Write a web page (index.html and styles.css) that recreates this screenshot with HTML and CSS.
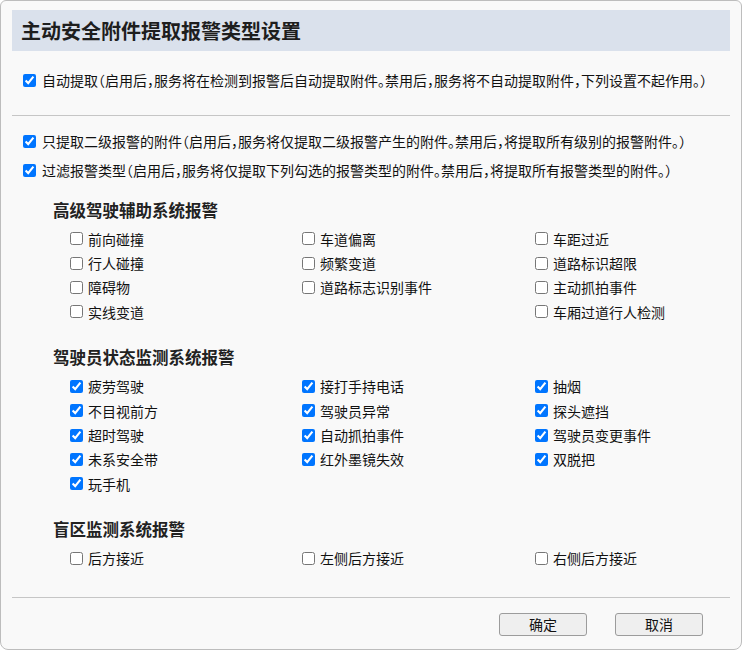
FILE: index.html
```html
<!DOCTYPE html>
<html lang="zh-CN">
<head>
<meta charset="utf-8">
<title>主动安全附件提取报警类型设置</title>
<link rel="stylesheet" href="styles.css">
</head>
<body>
<div class="window">
  <div class="title">主动安全附件提取报警类型设置</div>

  <label class="opt opt-first"><input type="checkbox" checked><span>自动提取（启用后，服务将在检测到报警后自动提取附件。禁用后，服务将不自动提取附件，下列设置不起作用。）</span></label>

  <hr class="sep sep-top">

  <label class="opt opt-second"><input type="checkbox" checked><span>只提取二级报警的附件（启用后，服务将仅提取二级报警产生的附件。禁用后，将提取所有级别的报警附件。）</span></label>
  <label class="opt opt-third"><input type="checkbox" checked><span>过滤报警类型（启用后，服务将仅提取下列勾选的报警类型的附件。禁用后，将提取所有报警类型的附件。）</span></label>

  <section class="group group-first">
    <h3 class="group-title">高级驾驶辅助系统报警</h3>
    <div class="grid">
      <label class="item"><input type="checkbox"><span>前向碰撞</span></label>
      <label class="item"><input type="checkbox"><span>车道偏离</span></label>
      <label class="item"><input type="checkbox"><span>车距过近</span></label>
      <label class="item"><input type="checkbox"><span>行人碰撞</span></label>
      <label class="item"><input type="checkbox"><span>频繁变道</span></label>
      <label class="item"><input type="checkbox"><span>道路标识超限</span></label>
      <label class="item"><input type="checkbox"><span>障碍物</span></label>
      <label class="item"><input type="checkbox"><span>道路标志识别事件</span></label>
      <label class="item"><input type="checkbox"><span>主动抓拍事件</span></label>
      <label class="item"><input type="checkbox"><span>实线变道</span></label>
      <div class="item empty"></div>
      <label class="item"><input type="checkbox"><span>车厢过道行人检测</span></label>
    </div>
  </section>

  <section class="group">
    <h3 class="group-title">驾驶员状态监测系统报警</h3>
    <div class="grid">
      <label class="item"><input type="checkbox" checked><span>疲劳驾驶</span></label>
      <label class="item"><input type="checkbox" checked><span>接打手持电话</span></label>
      <label class="item"><input type="checkbox" checked><span>抽烟</span></label>
      <label class="item"><input type="checkbox" checked><span>不目视前方</span></label>
      <label class="item"><input type="checkbox" checked><span>驾驶员异常</span></label>
      <label class="item"><input type="checkbox" checked><span>探头遮挡</span></label>
      <label class="item"><input type="checkbox" checked><span>超时驾驶</span></label>
      <label class="item"><input type="checkbox" checked><span>自动抓拍事件</span></label>
      <label class="item"><input type="checkbox" checked><span>驾驶员变更事件</span></label>
      <label class="item"><input type="checkbox" checked><span>未系安全带</span></label>
      <label class="item"><input type="checkbox" checked><span>红外墨镜失效</span></label>
      <label class="item"><input type="checkbox" checked><span>双脱把</span></label>
      <label class="item"><input type="checkbox" checked><span>玩手机</span></label>
    </div>
  </section>

  <section class="group">
    <h3 class="group-title">盲区监测系统报警</h3>
    <div class="grid">
      <label class="item"><input type="checkbox"><span>后方接近</span></label>
      <label class="item"><input type="checkbox"><span>左侧后方接近</span></label>
      <label class="item"><input type="checkbox"><span>右侧后方接近</span></label>
    </div>
  </section>

  <hr class="sep sep-bottom">

  <div class="actions">
    <button class="btn" type="button">确定</button>
    <button class="btn" type="button">取消</button>
  </div>
</div>
</body>
</html>
```
FILE: styles.css
```css
html {
  background: #ffffff;
}

body {
  margin: 0;
  font-family: "Noto Sans CJK SC", "Microsoft YaHei", "Noto Sans", sans-serif;
  font-feature-settings: "halt";
  color: #111111;
}

.window {
  box-sizing: border-box;
  width: 742px;
  height: 650px;
  overflow: hidden;
  border: 1px solid #bdbdbd;
  border-radius: 6px 6px 8px 8px;
  background: #f9f9f9;
  padding: 9px 11px 0 11px;
}

.title {
  height: 41px;
  line-height: 41px;
  background: #dae1ec;
  padding-left: 9px;
  font-size: 20px;
  font-weight: 700;
  color: #1e1e1e;
}

.opt {
  display: flex;
  align-items: center;
  height: 20px;
  padding-left: 11px;
  font-size: 14px;
  white-space: nowrap;
}

.opt input {
  margin: 0 6px 0 0;
  width: 13px;
  height: 13px;
  flex: none;
}

.opt-first {
  margin-top: 19px;
}

.opt-second {
  margin-top: 15px;
}

.opt-third {
  margin-top: 9px;
}

.sep {
  border: 0;
  border-top: 1px solid #c6c6c6;
  height: 0;
  margin: 0;
}

.sep-top {
  margin-top: 25px;
}

.sep-bottom {
  margin-top: 27px;
}

.group {
  padding-left: 41px;
}

.group-title {
  margin: 21px 0 0 0;
  font-size: 16.5px;
  line-height: 24px;
  font-weight: 700;
  color: #222222;
}

.group-first .group-title {
  margin-top: 17.5px;
}

.grid {
  display: grid;
  grid-template-columns: 232px 233px auto;
  grid-auto-rows: 24.4px;
  margin-top: 5px;
  padding-left: 17px;
}

.item {
  display: flex;
  align-items: center;
  font-size: 14px;
  white-space: nowrap;
}

.item input {
  margin: 0 5px 0 0;
  width: 13px;
  height: 13px;
  flex: none;
}

.actions {
  display: flex;
  justify-content: flex-end;
  gap: 28px;
  margin-top: 15px;
  padding-right: 27px;
}

.btn {
  width: 88px;
  height: 23px;
  padding: 0;
  border: 1px solid #9c9c9c;
  border-radius: 3px;
  background: #efefef;
  font-family: "Noto Sans CJK SC", "Microsoft YaHei", sans-serif;
  font-size: 14px;
  line-height: 21px;
  color: #111111;
}
```
